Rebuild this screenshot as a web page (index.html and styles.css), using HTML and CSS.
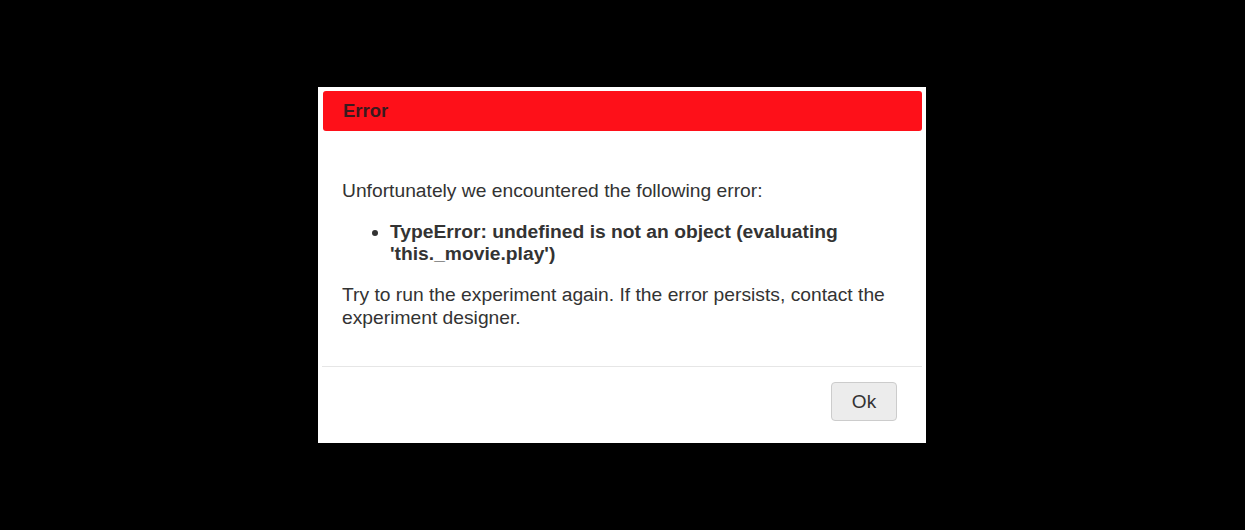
FILE: index.html
```html
<!DOCTYPE html>
<html lang="en">
<head>
  <meta charset="UTF-8" />
  <title>Error</title>
  <link rel="stylesheet" href="styles.css">
</head>
<body>
  <div class="overlay">
    <div class="dialog">
      <div class="dialog-title">Error</div>
      <div class="dialog-body">
        <p>Unfortunately we encountered the following error:</p>
        <ul class="error-list">
          <li>TypeError: undefined is not an object (evaluating 'this._movie.play')</li>
        </ul>
        <p>Try to run the experiment again. If the error persists, contact the experiment designer.</p>
      </div>
      <div class="dialog-footer">
        <button class="ok-btn">Ok</button>
      </div>
    </div>
  </div>
</body>
</html>
```
FILE: styles.css
```css
body {
  margin: 0;
  background: #000;
  font-family: "Liberation Sans", Arial, sans-serif;
  color: #333;
}

.overlay {
  height: 530px;
  padding-top: 87px;
  box-sizing: border-box;
}

.dialog {
  width: 608px;
  height: 356px;
  margin-left: 318px;
  background: #fff;
  padding: 4px;
  box-sizing: border-box;
  display: flex;
  flex-direction: column;
}

.dialog-title {
  background: #fe1019;
  border-radius: 3px;
  height: 40px;
  margin-left: 1px;
  padding: 0 20px;
  font-size: 18.5px;
  font-weight: bold;
  line-height: 40px;
  color: #3a1a1e;
}

.dialog-body {
  padding: 0 20px;
  font-size: 19.25px;
  line-height: 23px;
  flex: 1;
}

.dialog-body p {
  margin: 0;
}

.dialog-body p:first-child {
  margin-top: 48px;
}

.error-list {
  margin: 19px 0 18px;
  padding-left: 48px;
  font-weight: bold;
  line-height: 22px;
}

.dialog-footer {
  border-top: 1px solid #e6e6e6;
  display: flex;
  justify-content: flex-end;
  padding: 15px 25px 18px 0;
}

.ok-btn {
  width: 66px;
  height: 39px;
  background: #ececec;
  border: 1px solid #ccc;
  border-radius: 4px;
  font-family: inherit;
  font-size: 19px;
  color: #333;
}
```
